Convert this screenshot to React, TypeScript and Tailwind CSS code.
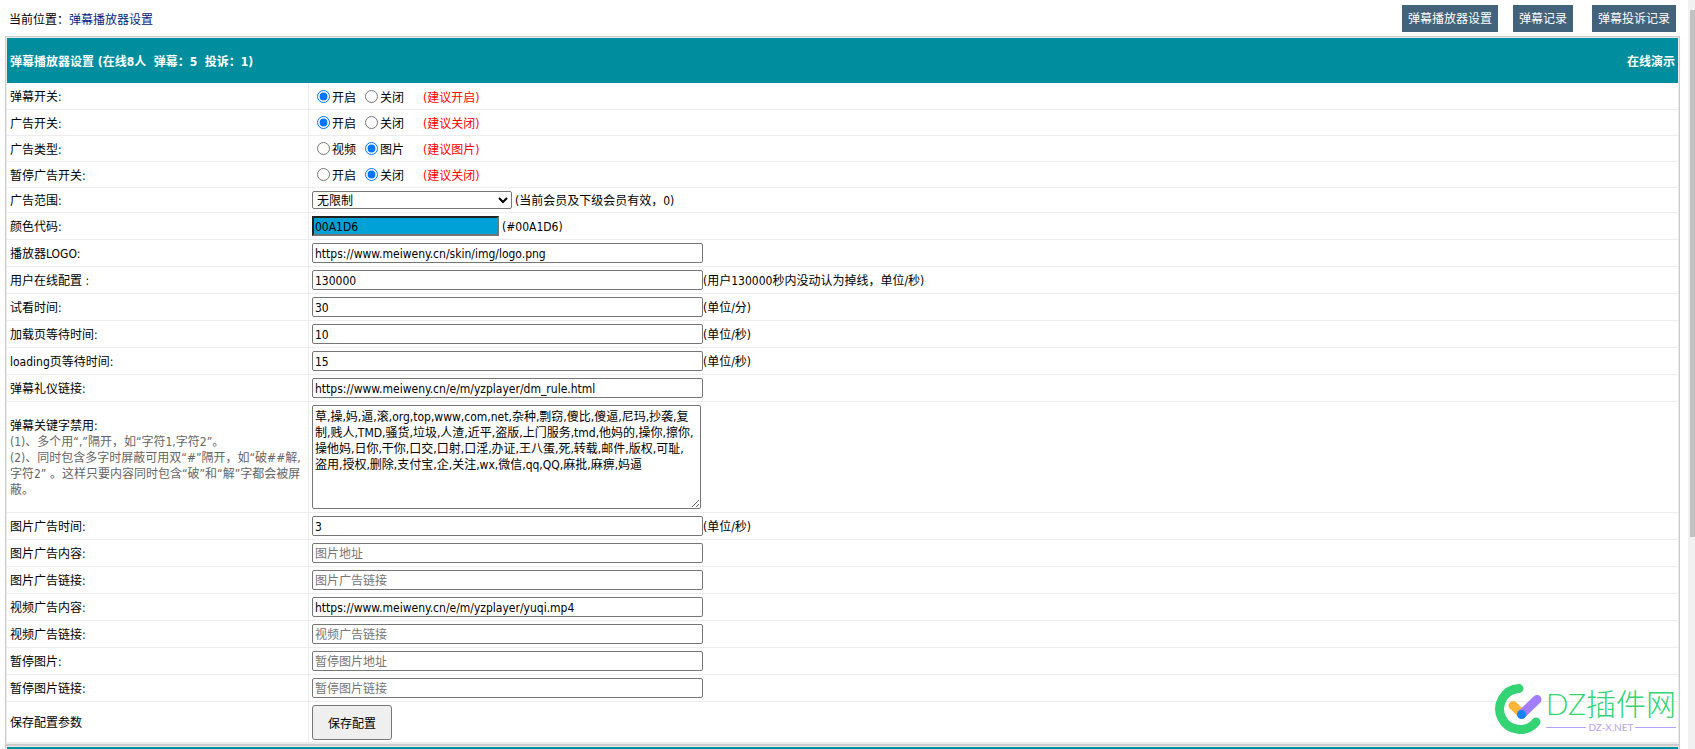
import type { ReactNode } from "react";

const BANNED_WORDS =
  "草,操,妈,逼,滚,org,top,www,com,net,杂种,剽窃,傻比,傻逼,尼玛,抄袭,复制,贱人,TMD,骚货,垃圾,人渣,近平,盗版,上门服务,tmd,他妈的,操你,擦你,操他妈,日你,干你,口交,口射,口淫,办证,王八蛋,死,转载,邮件,版权,可耻,盗用,授权,删除,支付宝,企,关注,wx,微信,qq,QQ,麻批,麻痹,妈逼";

const switches = [
  { id: "danmu", label: "弹幕开关:", options: ["开启", "关闭"], checked: 0, tip: "(建议开启)" },
  { id: "ad", label: "广告开关:", options: ["开启", "关闭"], checked: 0, tip: "(建议关闭)" },
  { id: "adtype", label: "广告类型:", options: ["视频", "图片"], checked: 1, tip: "(建议图片)" },
  { id: "pausead", label: "暂停广告开关:", options: ["开启", "关闭"], checked: 1, tip: "(建议关闭)" },
];

const basicFields = [
  { id: "logo", label: "播放器LOGO:", value: "https://www.meiweny.cn/skin/img/logo.png" },
  { id: "online", label: "用户在线配置 :", value: "130000", unit: "(用户130000秒内没动认为掉线，单位/秒)" },
  { id: "trytime", label: "试看时间:", value: "30", unit: "(单位/分)" },
  { id: "waittime", label: "加载页等待时间:", value: "10", unit: "(单位/秒)" },
  { id: "loadingtime", label: "loading页等待时间:", value: "15", unit: "(单位/秒)" },
  { id: "rule", label: "弹幕礼仪链接:", value: "https://www.meiweny.cn/e/m/yzplayer/dm_rule.html" },
];

const adFields = [
  { id: "pictime", label: "图片广告时间:", value: "3", unit: "(单位/秒)" },
  { id: "picurl", label: "图片广告内容:", placeholder: "图片地址" },
  { id: "piclink", label: "图片广告链接:", placeholder: "图片广告链接" },
  { id: "videourl", label: "视频广告内容:", value: "https://www.meiweny.cn/e/m/yzplayer/yuqi.mp4" },
  { id: "videolink", label: "视频广告链接:", placeholder: "视频广告链接" },
  { id: "pausepic", label: "暂停图片:", placeholder: "暂停图片地址" },
  { id: "pauselink", label: "暂停图片链接:", placeholder: "暂停图片链接" },
];

type Field = { id: string; label: string; value?: string; placeholder?: string; unit?: string };

function Row({ label, height, children }: { label: ReactNode; height: string; children: ReactNode }) {
  return (
    <tr className={height}>
      <td className="border-r border-b border-[#ececec] px-[3px] pt-0.5 pb-0 align-middle">{label}</td>
      <td className="border-b border-[#ececec] px-[3px] py-0 align-middle">
        <div className="flex items-center">{children}</div>
      </td>
    </tr>
  );
}

function TextRow({ field }: { field: Field }) {
  return (
    <Row height="h-[27px]" label={<label htmlFor={field.id}>{field.label}</label>}>
      <input
        id={field.id}
        type="text"
        defaultValue={field.value}
        placeholder={field.placeholder}
        className="h-5 w-[391px] rounded-xs border border-[#767676] bg-white px-0.5 pt-0.5 placeholder:text-[#757575]"
      />
      {field.unit && <span className="pt-0.5">{field.unit}</span>}
    </Row>
  );
}

function SiteLogo() {
  return (
    <div className="absolute right-[19px] bottom-[14px] flex items-center gap-1 font-['Lato','Noto_Sans_CJK_SC',sans-serif]">
      <svg width="48" height="52" viewBox="0 0 48 52" fill="none" strokeLinecap="round" aria-hidden="true">
        <path d="M25 5.500A20.500 20.500 0 1 0 42 39" stroke="#34d475" strokeWidth="9" />
        <path d="M19 22.500L27 30" stroke="#ffb638" strokeWidth="9" />
        <path d="M43 16.500L28 31" stroke="#a27dff" strokeWidth="9" />
        <circle cx="27.500" cy="31.500" r="4.500" fill="#1383ff" />
      </svg>
      <div>
        <div className="text-[30px] leading-9 font-light text-[#34d475]">DZ插件网</div>
        <div className="flex items-center gap-0.5 text-[10px] leading-3 text-[#b9a1fa]">
          <span className="h-px flex-1 bg-[#b9a1fa]" />
          <span>DZ-X.NET</span>
          <span className="h-px flex-1 bg-[#b9a1fa]" />
        </div>
      </div>
    </div>
  );
}

export default function App() {
  return (
    <div className="relative flex h-screen overflow-hidden bg-white font-['DejaVu_Sans_Condensed','Noto_Sans_CJK_SC',sans-serif] text-xs leading-4 text-black">
      <main className="min-w-0 flex-1 pr-2 pl-[5px]">
        <header className="flex h-9 items-center justify-between px-1">
          <div className="pt-1">
            当前位置：<a href="#" className="text-[#001f80]">弹幕播放器设置</a>
          </div>
          <nav className="flex items-center text-white">
            <a href="#" className="mr-[15px] bg-[#43637b] px-1.5 pt-1.5 pb-1 leading-[17px]">弹幕播放器设置</a>
            <a href="#" className="mr-[19px] bg-[#43637b] px-1.5 pt-1.5 pb-1 leading-[17px]">弹幕记录</a>
            <a href="#" className="bg-[#43637b] px-1.5 pt-1.5 pb-1 leading-[17px]">弹幕投诉记录</a>
          </nav>
        </header>

        <form className="border border-[#ccc] bg-[#ececec] p-px">
          <div className="flex h-[45px] items-center justify-between bg-[#008e9f] px-[3px] pt-0.5 font-bold text-white">
            <h1 className="whitespace-pre">弹幕播放器设置 (在线8人  弹幕：5  投诉：1)</h1>
            <a href="#">在线演示</a>
          </div>
          <table className="w-full table-fixed border-separate border-spacing-0 bg-white">
            <colgroup>
              <col className="w-[302px]" />
              <col />
            </colgroup>
            <tbody>
              {switches.map((item, index) => (
                <Row key={item.id} height={index === 0 ? "h-[27px]" : "h-[26px]"} label={item.label}>
                  {item.options.map((option, i) => (
                    <label key={option} className="mr-1 flex items-center">
                      <input
                        type="radio"
                        name={item.id}
                        defaultChecked={item.checked === i}
                        className="mr-0.5 ml-[5px] size-[13px]"
                      />
                      <span className="pt-[3px]">{option}</span>
                    </label>
                  ))}
                  <span className="ml-[15px] pt-[3px] text-[#f00]">{item.tip}</span>
                </Row>
              ))}
              <Row height="h-[25px]" label={<label htmlFor="scope">广告范围:</label>}>
                <select
                  id="scope"
                  className="mr-[3px] h-[18px] w-[200px] rounded-xs border border-[#767676] bg-white pt-px text-xs leading-4"
                >
                  <option>无限制</option>
                </select>
                <span className="pt-0.5">(当前会员及下级会员有效，0)</span>
              </Row>
              <Row height="h-[27px]" label={<label htmlFor="color">颜色代码:</label>}>
                <input
                  id="color"
                  type="text"
                  defaultValue="00A1D6"
                  className="mr-[3px] h-5 w-[187px] border-2 border-t-[#222] border-r-[#767676] border-b-[#767676] border-l-[#222] bg-[#00a1d6] px-px pt-0.5"
                />
                <span className="pt-0.5">(#00A1D6)</span>
              </Row>
              {basicFields.map((field) => (
                <TextRow key={field.id} field={field} />
              ))}
              <Row
                height="h-[111px]"
                label={
                  <>
                    <label htmlFor="keywords">弹幕关键字禁用:</label>
                    <p className="text-[#666]">
                      (1)、多个用“,”隔开，如“字符1,字符2”。
                      <br />
                      (2)、同时包含多字时屏蔽可用双“#”隔开，如“破##解,字符2” 。这样只要内容同时包含“破”和“解”字都会被屏蔽。
                    </p>
                  </>
                }
              >
                <textarea
                  id="keywords"
                  defaultValue={BANNED_WORDS}
                  className="block h-[104px] w-[389px] rounded-xs border border-[#767676] bg-white py-[3px] pr-[5px] pl-0.5"
                />
              </Row>
              {adFields.map((field) => (
                <TextRow key={field.id} field={field} />
              ))}
              <Row height="h-[41px]" label="保存配置参数">
                <button type="submit" className="h-[35px] w-20 rounded-[3px] border border-[#767676] bg-[#efefef] pt-[3px]">
                  保存配置
                </button>
              </Row>
            </tbody>
          </table>
        </form>
        <section className="border border-[#ccc] bg-[#ececec] p-px">
          <div className="h-[45px] bg-[#008e9f]" />
        </section>
      </main>

      <div className="w-[7px] bg-[#f1f1f1] pt-2.5 pl-0.5" aria-hidden="true">
        <div className="h-[527px] bg-[#c1c1c1]" />
      </div>

      <SiteLogo />
    </div>
  );
}
